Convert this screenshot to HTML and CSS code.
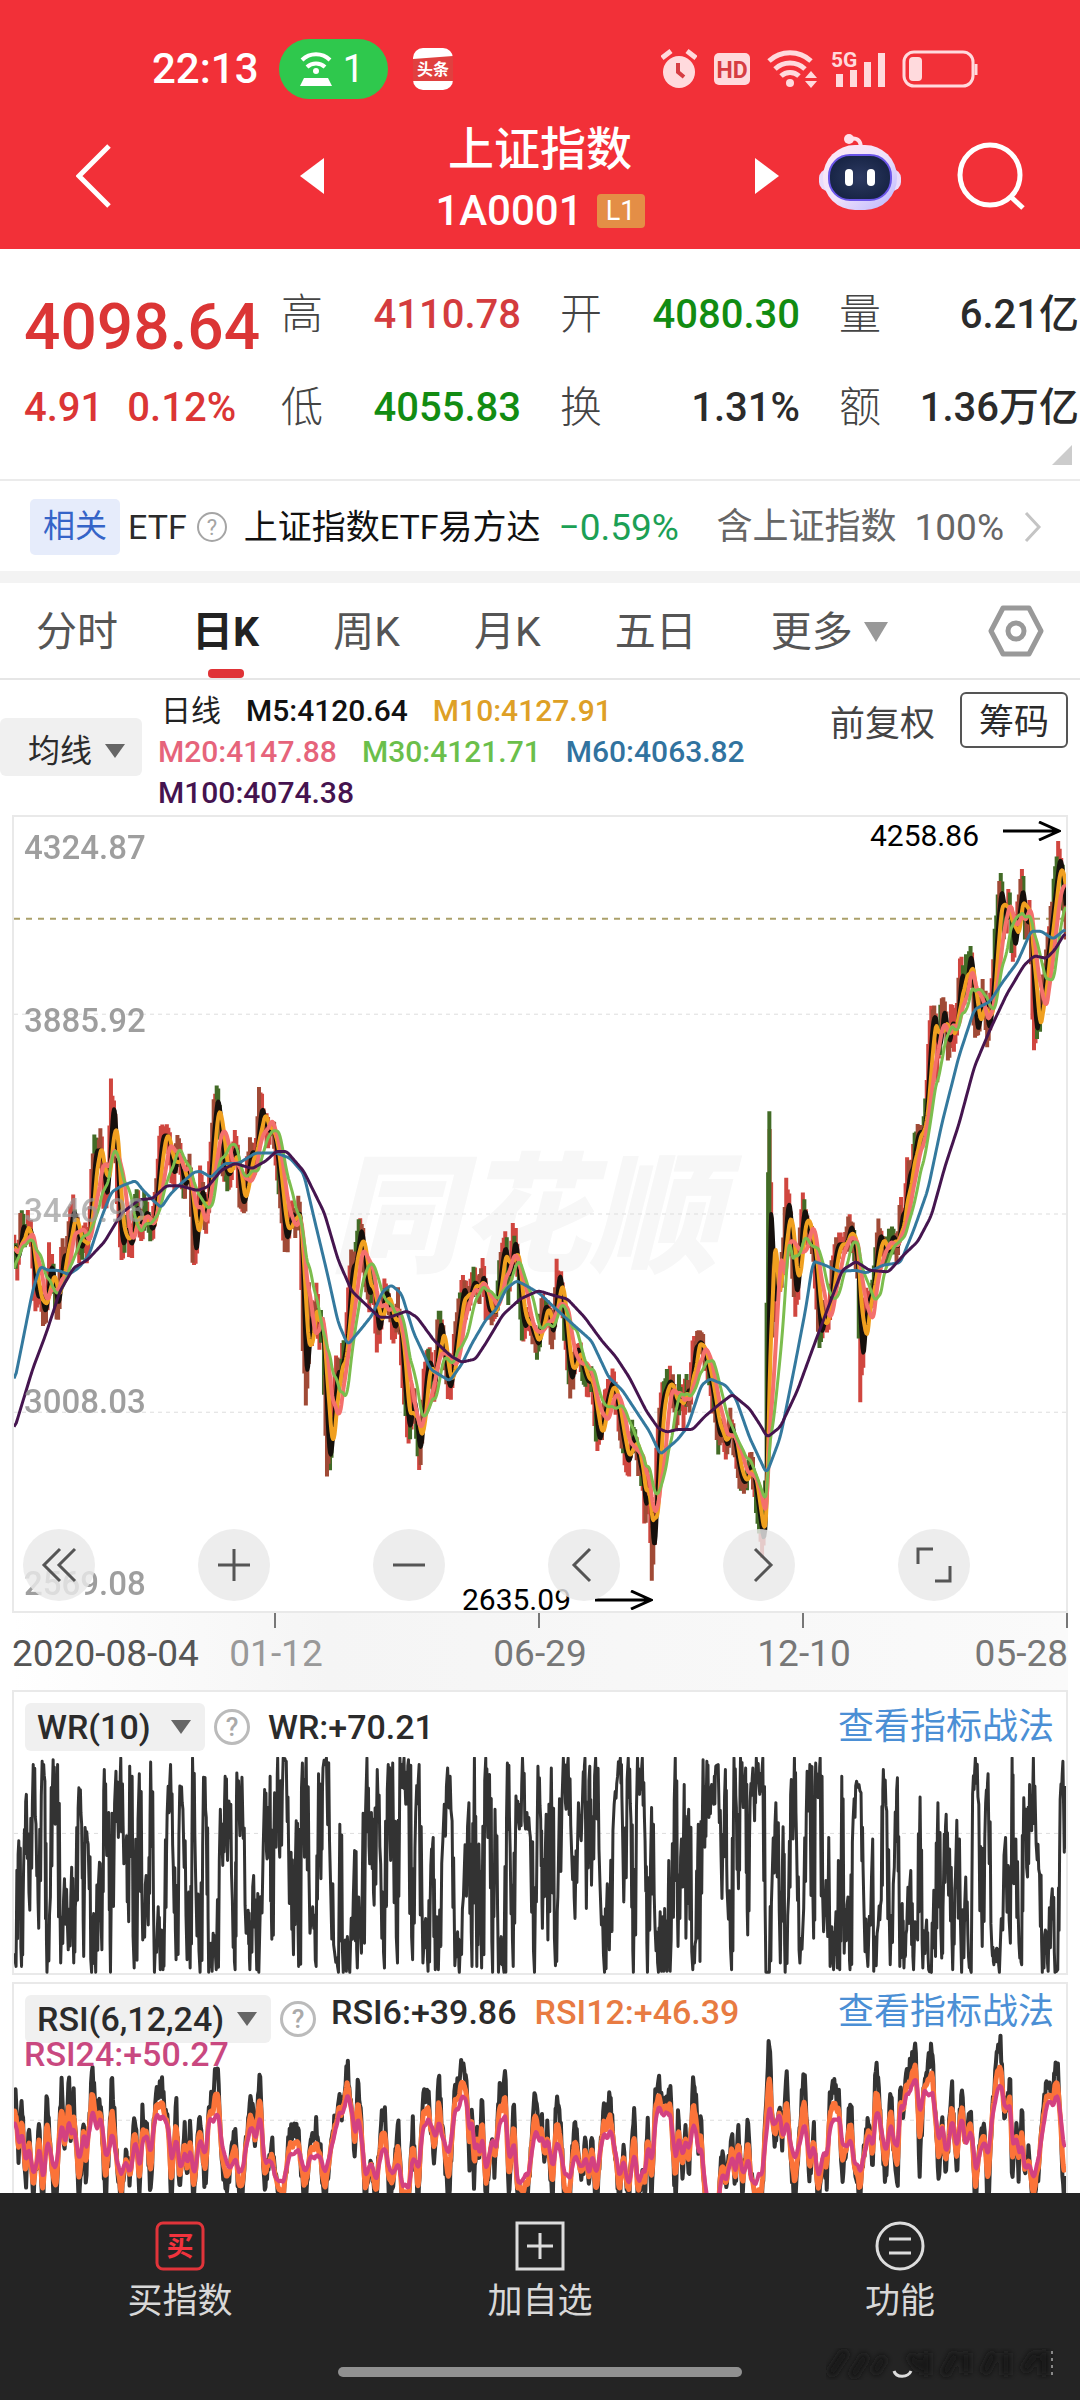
FILE: index.html
```
<!DOCTYPE html>
<html lang="zh-CN">
<head>
<meta charset="utf-8">
<meta name="viewport" content="width=device-width">
<title>上证指数 1A0001</title>
<link rel="stylesheet" href="styles.css">
</head>
<body>
<header class="top">
  <div class="status">
    <div class="status-side">
      <time class="clock">22:13</time>
      <span class="hotspot">
        <svg width="34" height="36" viewBox="0 0 34 36" fill="none" stroke="#fff" stroke-width="4"><path d="M3 9a20 20 0 0 1 28 0M8 16a13 13 0 0 1 18 0"/><circle cx="17" cy="20" r="3" fill="#fff" stroke="none"/><path d="M5 27h24l4 8H1z" fill="#fff" stroke="none"/></svg>
        <span>1</span>
      </span>
      <svg class="news" width="40" height="42" viewBox="0 0 40 42"><rect width="40" height="42" rx="10" fill="#fff"/><path d="M0 11l40-3v25H0z" fill="#e0403f"/><text x="20" y="27" text-anchor="middle" font-size="16" font-weight="700" fill="#fff">头条</text></svg>
    </div>
    <div class="status-side status-right">
      <svg width="36" height="40" viewBox="0 0 36 40"><circle cx="18" cy="23" r="16" fill="#ffdadd"/><path d="M1 9l9-7M35 9l-9-7" stroke="#ffdadd" stroke-width="5"/><path d="M17 14v9l6 5" fill="none" stroke="#d63d43" stroke-width="4"/></svg>
      <svg width="36" height="34" viewBox="0 0 36 34"><rect y="1" width="36" height="32" rx="5" fill="#ffdadd"/><text x="18" y="26" text-anchor="middle" font-size="23" font-weight="700" fill="#d63d43">HD</text></svg>
      <svg class="wifi" width="50" height="40" viewBox="0 0 50 40"><path d="M2 12a31 31 0 0 1 42 0M8 20a22 22 0 0 1 30 0M14 27a13 13 0 0 1 18 0" fill="none" stroke="#ffdadd" stroke-width="5"/><circle cx="23" cy="34" r="4" fill="#ffdadd"/><path d="M38 29l6-7 6 7zM38 32h12l-6 7z" fill="#ffdadd"/></svg>
      <svg width="54" height="40" viewBox="0 0 54 40" fill="#ffdadd"><text y="18" font-size="21" font-weight="700">5G</text><path d="M5 25h7v13H5zM19 21h7v17h-7zM33 13h7v25h-7zM47 4h7v34h-7z"/></svg>
      <svg width="78" height="38" viewBox="0 0 78 38"><rect x="2" y="2" width="69" height="34" rx="10" fill="none" stroke="#ffdadd" stroke-width="3"/><rect x="7" y="7" width="13" height="24" rx="4" fill="#ffdadd"/><path d="M74 14v11" stroke="#ffdadd" stroke-width="3"/></svg>
    </div>
  </div>
  <nav class="nav">
    <div class="nav-left">
      <button class="icon-btn" aria-label="返回"><svg width="36" height="64" viewBox="0 0 36 64"><path d="M33 2L3 32l30 30" fill="none" stroke="#fff" stroke-width="5"/></svg></button>
      <button class="icon-btn" aria-label="上一只"><svg width="24" height="36" viewBox="0 0 24 36"><path d="M24 0v36L0 18z" fill="#fff"/></svg></button>
    </div>
    <div class="nav-title">
      <h1>上证指数</h1>
      <p><span>1A0001</span><span class="level">L1</span></p>
    </div>
    <div class="nav-right">
      <button class="icon-btn" aria-label="下一只"><svg width="24" height="36" viewBox="0 0 24 36"><path d="M0 0v36l24-18z" fill="#fff"/></svg></button>
      <button class="icon-btn robot" aria-label="智能助手">
        <svg width="82" height="78" viewBox="0 0 82 78"><defs><linearGradient id="shell" x1="0" y1="0" x2="1" y2="1"><stop offset="0" stop-color="#ffe9f3"/><stop offset=".5" stop-color="#efe2fb"/><stop offset="1" stop-color="#b9b4ff"/></linearGradient><radialGradient id="visor"><stop offset="0" stop-color="#2c3961"/><stop offset="1" stop-color="#182546"/></radialGradient></defs><path d="M30 6c10-2 12 3 12 10" fill="none" stroke="#ffe0ea" stroke-width="4"/><circle cx="30" cy="6" r="5" fill="#ffe0ea"/><rect x="0" y="36" width="82" height="22" rx="9" fill="#e9dcfb"/><rect x="4" y="12" width="74" height="65" rx="32" fill="url(#shell)"/><rect x="10" y="22" width="62" height="45" rx="21" fill="url(#visor)" stroke="#6b55e8" stroke-width="2"/><rect x="26" y="36" width="8" height="17" rx="4" fill="#fff"/><rect x="48" y="36" width="8" height="17" rx="4" fill="#fff"/></svg>
      </button>
      <button class="icon-btn search" aria-label="搜索"><svg width="68" height="68" viewBox="0 0 68 68" fill="none" stroke="#fff" stroke-width="5"><circle cx="33" cy="33" r="30"/><path d="M53 54l13 12"/></svg></button>
    </div>
  </nav>
</header>

<main class="main">
  <section class="quote">
    <div class="last"><strong>4098.64</strong><p><span>4.91</span><span>0.12%</span></p></div>
    <dl class="stats">
      <div><dt>高</dt><dd class="up">4110.78</dd></div>
      <div><dt>开</dt><dd class="down">4080.30</dd></div>
      <div><dt>量</dt><dd>6.21亿</dd></div>
      <div><dt>低</dt><dd class="down">4055.83</dd></div>
      <div><dt>换</dt><dd>1.31%</dd></div>
      <div><dt>额</dt><dd>1.36万亿</dd></div>
    </dl>
    <span class="fold"></span>
  </section>

  <a class="etf" href="#etf">
    <span class="tag">相关</span><span class="etf-kind">ETF</span>
    <svg class="etf-help" width="32" height="32" viewBox="0 0 32 32"><circle cx="16" cy="16" r="14" fill="none" stroke="#a5a5a5" stroke-width="2"/><text x="16" y="24" text-anchor="middle" font-size="22" fill="#a5a5a5">?</text></svg>
    <span class="etf-name">上证指数ETF易方达</span><span class="etf-chg">−0.59%</span><span class="etf-part">含上证指数</span><span class="etf-pct">100%</span>
    <svg class="etf-go" width="18" height="32" viewBox="0 0 18 32"><path d="M2 2l13 14L2 30" fill="none" stroke="#c4c4c4" stroke-width="3"/></svg>
  </a>

  <div class="tabs">
    <button>分时</button><button class="on">日K</button><button>周K</button><button>月K</button><button>五日</button><button class="more">更多<i class="caret"></i></button>
    <button class="gear" aria-label="设置"><svg width="56" height="52" viewBox="0 0 56 52" fill="none" stroke="#999" stroke-width="5"><path d="M15 3h26l12 23-12 23H15L3 26z" stroke-linejoin="round"/><circle cx="28" cy="26" r="8"/></svg></button>
  </div>

  <div class="averages">
    <label class="picker picker-ma"><select aria-label="主图指标"><option>均线</option></select><i class="caret"></i></label>
    <div class="ma-list">
      <p><span class="c-day">日线</span><span class="c5">M5:4120.64</span><span class="c10">M10:4127.91</span></p>
      <p><span class="c20">M20:4147.88</span><span class="c30">M30:4121.71</span><span class="c60">M60:4063.82</span></p>
      <p><span class="c100">M100:4074.38</span></p>
    </div>
    <button class="adjust">前复权</button>
    <button class="chips">筹码</button>
  </div>

  <section class="kline">
    <span class="brand">同花顺</span>
    <svg class="plot" id="kline" viewBox="36 31 3064 1522" preserveAspectRatio="none"></svg>
    <span class="scale s1">4324.87</span><span class="scale s2">3885.92</span><span class="scale s3">3446.98</span><span class="scale s4">3008.03</span><span class="scale s5">2569.08</span>
    <span class="mark high">4258.86<svg width="58" height="20" viewBox="0 0 58 20"><path d="M0 10h56M36 1l20 9-20 9" fill="none" stroke="#000" stroke-width="3"/></svg></span>
    <span class="mark low">2635.09<svg width="58" height="20" viewBox="0 0 58 20"><path d="M0 10h56M36 1l20 9-20 9" fill="none" stroke="#000" stroke-width="3"/></svg></span>
    <div class="tools">
      <button aria-label="最早"><svg viewBox="0 0 36 36"><path d="M19 2L3 18l16 16M34 2L18 18l16 16"/></svg></button>
      <button aria-label="放大"><svg viewBox="0 0 36 36"><path d="M2 18h32M18 2v32"/></svg></button>
      <button aria-label="缩小"><svg viewBox="0 0 36 36"><path d="M2 18h32"/></svg></button>
      <button aria-label="左移"><svg viewBox="0 0 36 36"><path d="M24 2L8 18l16 16"/></svg></button>
      <button aria-label="右移"><svg viewBox="0 0 36 36"><path d="M14 2l16 16-16 16"/></svg></button>
      <button aria-label="全屏"><svg viewBox="0 0 36 36"><path d="M2 17V2h15M19 34h15V19"/></svg></button>
    </div>
  </section>
  <div class="dates"><span>2020-08-04</span><span class="d1">01-12</span><span>06-29</span><span>12-10</span><span>05-28</span></div>

  <section class="panel wr">
    <div class="panel-head">
      <label class="picker"><select aria-label="副图指标一"><option>WR(10)</option></select><i class="caret"></i></label>
      <button class="help" aria-label="说明">?</button>
      <span>WR:+70.21</span>
      <a href="#wr">查看指标战法</a>
    </div>
    <svg class="plot" id="wr" viewBox="36 47 3064 656" preserveAspectRatio="none"></svg>
  </section>
  <section class="panel rsi">
    <svg class="plot" id="rsi" viewBox="36 727 3064 632" preserveAspectRatio="none"></svg>
    <div class="panel-head">
      <label class="picker"><select aria-label="副图指标二"><option>RSI(6,12,24)</option></select><i class="caret"></i></label>
      <button class="help" aria-label="说明">?</button>
      <span>RSI6:+39.86</span><span class="r12">RSI12:+46.39</span>
      <a href="#rsi">查看指标战法</a>
    </div>
    <p class="r24">RSI24:+50.27</p>
  </section>
</main>

<footer class="bottom">
  <div class="actions">
    <button><svg width="50" height="50" viewBox="0 0 50 50"><rect x="2" y="2" width="46" height="46" rx="6" fill="none" stroke="#e1343a" stroke-width="3"/><text x="25" y="35" text-anchor="middle" font-size="27" font-weight="700" fill="#f2333d">买</text></svg>买指数</button>
    <button><svg width="50" height="50" viewBox="0 0 50 50" fill="none" stroke="#ddd" stroke-width="3"><rect x="2" y="2" width="46" height="46"/><path d="M12 25h26M25 12v26"/></svg>加自选</button>
    <button><svg width="50" height="50" viewBox="0 0 50 50" fill="none" stroke="#ddd" stroke-width="3"><circle cx="25" cy="25" r="23"/><path d="M14 18h22M14 32h22"/></svg>功能</button>
  </div>
  <span class="homebar"></span>
  <svg class="smudge" width="230" height="36" viewBox="0 0 230 36"><defs><filter id="soft"><feGaussianBlur stdDeviation="3"/></filter></defs><path d="M4 30L20 6M26 32l14-22M48 28l10-16M84 10l10 14M100 8v22M118 30l12-22M140 8v20M158 28l10-20M180 8v22M198 26l12-18M218 6v24" stroke="#151515" stroke-width="9" filter="url(#soft)"/><path d="M68 26c2 7 14 7 17 0" fill="none" stroke="#ddd" stroke-width="3"/><path d="M226 6v26" stroke="#888" stroke-width="2" stroke-dasharray="3 4"/></svg>
</footer>
<script src="charts.js"></script>
</body>
</html>
```
FILE: styles.css
```
* { box-sizing: border-box; }
body { margin: 0; min-height: 100vh; display: flex; flex-direction: column; background: #fff; color: #2b2b2b; font-family: Roboto, "Noto Sans CJK SC", sans-serif; font-size: 36px; line-height: 1; }
h1, p, dl, dd { margin: 0; font-weight: inherit; }
button, select { font: inherit; color: inherit; background: none; border: 0; padding: 0; margin: 0; }
a { color: inherit; text-decoration: none; }
svg { display: block; flex: none; }
span, dt, dd { white-space: nowrap; }

.top { background: #f23038; color: #fff; height: 249px; }
.status { display: flex; justify-content: space-between; height: 114px; padding: 24px 100px 0 152px; }
.status-side { display: flex; align-items: center; }
.status-right { gap: 17px; }
.wifi { margin-right: -3px; }
.clock { font-size: 42px; font-weight: 500; width: 127px; }
.hotspot { display: flex; align-items: center; justify-content: space-between; width: 109px; height: 60px; padding: 0 24px 0 20px; border-radius: 30px; background: #2fc84d; font-size: 38px; }
.news { margin-left: 25px; }
.nav { display: grid; grid-template-columns: 1fr 216px 1fr; align-items: center; height: 126px; }
.icon-btn { display: block; }
.nav-left { display: flex; align-items: center; justify-content: space-between; padding: 0 108px 4px 76px; }
.nav-right { display: flex; align-items: center; padding: 0 55px 4px 107px; }
.robot { margin-left: 40px; margin-top: -8px; }
.search { margin-left: auto; }
.nav-title { display: flex; flex-direction: column; align-items: center; padding-top: 4px; font-weight: 500; }
.nav-title h1 { font-size: 46px; line-height: 62px; }
.nav-title p { display: flex; align-items: center; gap: 14px; font-size: 42px; line-height: 62px; }
.level { width: 48px; height: 34px; border-radius: 4px; background: #e48e46; font-size: 27px; line-height: 34px; font-weight: 400; text-align: center; }

.main { display: flex; flex-direction: column; flex: 1; }
.quote { position: relative; display: flex; height: 232px; border-bottom: 2px solid #ebebeb; font-weight: 500; }
.last { width: 281px; padding: 42px 0 0 24px; color: #db3535; }
.last strong { display: block; font-size: 64px; line-height: 74px; font-weight: 500; }
.last p { display: flex; gap: 24px; font-size: 40px; line-height: 86px; }
.stats { flex: 1; display: grid; grid-template-columns: repeat(3, 1fr); column-gap: 39px; grid-auto-rows: 93px; padding: 19px 1px 0 0; }
.stats div { display: flex; align-items: center; justify-content: space-between; font-size: 40px; }
.stats dt { font-size: 42px; font-weight: 300; color: #444; }
.up { color: #d43c3e; }
.down { color: #128c12; }
.fold { position: absolute; right: 8px; bottom: 14px; border-left: 20px solid transparent; border-bottom: 20px solid #ccc; }

.etf { display: flex; align-items: center; height: 90px; padding: 2px 38px 0 30px; }
.tag { width: 90px; height: 56px; border-radius: 5px; background: #e6ecfb; color: #3564c8; font-size: 32px; line-height: 54px; text-align: center; }
.etf-kind { font-size: 34px; margin: 0 9px 0 8px; }
.etf-name { font-size: 34px; color: #111; margin-left: 16px; }
.etf-chg { color: #1ca055; margin-left: 18px; font-size: 37px; }
.etf-part { color: #666; margin-left: auto; }
.etf-pct { color: #666; margin: 0 20px 0 18px; font-size: 37px; }

.tabs { display: flex; align-items: center; height: 109px; padding: 0 36px; border-top: 12px solid #f3f3f3; border-bottom: 2px solid #e6e6e6; justify-content: space-between; color: #555; font-size: 41px; }
.tabs button { position: relative; height: 95px; padding-top: 3px; }
.tabs .on { color: #222; font-weight: 700; }
.on::after { content: ""; position: absolute; left: 50%; bottom: 0; margin-left: -18px; width: 36px; height: 9px; border-radius: 4px; background: #e03337; }
.caret { display: inline-block; flex: none; border: 10px solid transparent; border-top: 14px solid #666; border-bottom: 0; }
.more { display: flex; align-items: center; gap: 11px; }
.more .caret { border-width: 20px 12px 0; border-top-color: #999; }
.tabs .gear { margin-left: 26px; padding-top: 0; }

.averages { display: flex; align-items: flex-start; height: 135px; padding-right: 12px; }
.picker { position: relative; display: flex; align-items: center; justify-content: space-between; min-width: 180px; height: 48px; padding: 0 14px 0 12px; gap: 12px; border-radius: 6px; background: #f0f0f0; }
.picker select { appearance: none; font-size: 34px; line-height: 40px; }
.picker-ma { min-width: 0; width: 142px; height: 58px; margin: 38px 16px 0 0; padding: 8px 18px 0 28px; }
.picker-ma select { font-size: 32px; }
.ma-list { flex: 1; padding-top: 10px; font-size: 30px; font-weight: 500; line-height: 41px; }
.ma-list p { display: flex; gap: 25px; }
.c-day { color: #222; font-weight: 400; padding-left: 3px; }
.c5 { color: #111; }
.c10 { color: #dea026; }
.c20 { color: #e6647b; }
.c30 { color: #6bbf4b; }
.c60 { color: #31739f; }
.c100 { color: #45134f; }
.adjust { font-size: 35px; line-height: 54px; margin: 18px 25px 0 0; color: #444; }
.chips { width: 108px; height: 56px; margin-top: 12px; padding-top: 4px; border: 2px solid #555; border-radius: 6px; font-size: 35px; }

.kline { position: relative; height: 798px; margin: 0 12px; border: 2px solid #e9e9e9; }
.plot { position: absolute; inset: 0; width: 100%; height: 100%; }
.plot path { fill: none; vector-effect: non-scaling-stroke; stroke-linejoin: round; }
.brand { position: absolute; left: 30%; top: 336px; font-size: 130px; font-style: italic; font-weight: 900; color: #f7f7f7; }
.scale { position: absolute; left: 10px; font-size: 33px; font-weight: 500; color: #999; opacity: .95; }
.s1 { top: 14px; }
.s2 { top: 187px; }
.s3 { top: 377px; opacity: .7; }
.s4 { top: 568px; }
.s5 { top: 750px; }
.mark { position: absolute; display: flex; font-size: 30px; color: #000; gap: 24px; }
.high { right: 5px; top: 4px; }
.low { right: 413px; bottom: -4px; align-items: center; }
.tools { position: absolute; left: 9px; right: 96px; bottom: 10px; display: flex; justify-content: space-between; }
.tools button { width: 72px; height: 72px; border-radius: 50%; background: rgba(233, 233, 233, .82); display: grid; place-items: center; }
.tools svg { width: 36px; height: 36px; fill: none; stroke: #555; stroke-width: 3px; }
.dates { display: grid; grid-template-columns: minmax(0, 1fr) repeat(3, minmax(0, 2fr)) minmax(0, 1fr); align-items: center; height: 77px; margin: 0 12px; padding-top: 4px; color: #777; font-size: 37px; text-align: center; background: repeating-linear-gradient(90deg, transparent 0 calc(25% - 2px), #777 calc(25% - 2px) 25%) 0 0 / 100% 15px no-repeat, linear-gradient(90deg, #fff, #f5f5f5 30%, #fafafa); }
.dates span:first-child { color: #555; justify-self: start; }
.dates span:last-child { justify-self: end; }
.dates .d1 { color: #999; }

.panel { position: relative; margin: 0 12px; border: 2px solid #e9e9e9; }
.wr { height: 285px; }
.wr .plot { top: 65px; height: 217px; }
.rsi { flex: 1; min-height: 211px; margin-top: 7px; border-bottom: 0; overflow: hidden; }
.panel-head { position: relative; display: flex; align-items: center; height: 48px; margin: 11px 12px 0 11px; font-size: 34px; font-weight: 500; }
.panel-head > span { margin-left: 18px; }
.panel-head a { margin-left: auto; color: #4b8fd5; font-size: 36px; font-weight: 400; }
.help { width: 36px; height: 36px; margin-left: 9px; border: 3px solid #bbb; border-radius: 50%; color: #aaa; font-size: 26px; }
.rsi .panel-head > span, .rsi .panel-head a { align-self: flex-start; line-height: 34px; }
.rsi .panel-head > span { margin-left: 15px; }
.rsi .panel-head .r12 { color: #e87b42; margin-left: 18px; }
.r24 { position: relative; color: #c94880; margin-left: 10px; font-size: 34px; font-weight: 500; line-height: 22px; }

.bottom { position: relative; height: 208px; background: #242424; color: #d8d8d8; }
.actions { display: grid; grid-template-columns: repeat(3, 1fr); }
.actions button { display: flex; flex-direction: column; align-items: center; gap: 13px; padding-top: 28px; font-size: 35px; line-height: 36px; }
.homebar { position: absolute; left: 50%; bottom: 24px; width: 404px; height: 10px; margin-left: -202px; border-radius: 5px; background: #919191; }
.smudge { position: absolute; right: 24px; bottom: 20px; }
```
FILE: charts.js
```
const HALF = 1568;
const join = (a, b) => {
  const pairs = (s, dx) => s.trim().split(/\s+/).map(p => p.split(',').map(Number)).map(([x, y]) => [x + dx, y]);
  return pairs(a, 0).concat(pairs(b, HALF));
};

const price = join(
  `36,850 45,900 57,790 68,850 78,800 90,880 97,980 105,930 125,995 138,870 150,930 162,985 175,850 185,890 200,790 208,780 218,830 228,870 240,820 250,870 262,720 273,645 282,700 288,635 297,770 308,740 318,555 326,600 335,740 348,880 360,800 373,870 385,800 393,755 404,845 415,775 436,835 450,750 460,645 470,640 485,645 497,740 510,650 520,700 528,750 548,690 557,895 565,850 578,720 594,825 606,700 616,600 628,555 640,690 658,725 670,690 680,640 690,755 705,780 715,700 726,660 738,700 750,570 760,610 775,640 787,620 805,720 826,860 840,780 857,820 867,750 876,1030 887,1150 895,940 905,1030 916,935 924,1050 932,980 948,1290 962,1200 972,1080 985,1110 991,1050 1000,1060 1016,880 1028,900 1037,825 1046,815 1058,920 1070,960 1080,900 1092,1035 1105,980 1112,930 1125,960 1142,1025 1155,955 1165,1100 1187,1230 1195,1110 1205,1200 1216,1270 1228,1120 1242,1060 1260,1140 1268,1010 1275,985 1290,1080 1301,1145 1312,1080 1322,1020 1333,970 1345,915 1353,980 1362,940 1375,915 1388,950 1400,890 1410,975 1425,980 1438,980 1450,890 1466,840 1475,945 1490,820 1500,890 1517,1025 1530,980 1540,1015 1562,1050`,
  `5,970 20,970 36,1040 47,905 57,910 68,1000 88,1130 100,1050 110,1050 125,1100 140,1120 150,1100 165,1240 180,1190 190,1150 208,1105 220,1150 240,1235 255,1280 268,1200 285,1270 300,1310 306,1415 314,1250 325,1490 335,1350 340,1240 350,1150 360,1130 378,1105 398,1190 404,1110 418,1180 425,1095 435,1170 443,1050 455,1045 464,1030 475,1060 490,1100 505,1160 520,1230 530,1200 541,1255 552,1180 565,1240 585,1310 600,1300 612,1260 630,1350 650,1440 657,1300 661,870 668,595 672,850 675,1040 683,920 690,900 700,930 710,830 718,740 725,790 735,900 745,975 753,870 765,755 775,830 790,830 800,900 815,1050 825,970 838,1000 850,900 860,850 875,850 890,850 903,800 913,860 925,900 932,1140 940,1010 950,960 965,940 975,890 983,820 995,850 1010,870 1023,825 1040,870 1048,780 1060,800 1070,700 1080,720 1090,650 1103,630 1115,640 1125,560 1135,430 1142,410 1152,415 1158,540 1165,410 1178,400 1187,500 1200,370 1204,480 1215,400 1225,295 1235,400 1240,320 1255,285 1265,450 1275,430 1290,360 1304,465 1318,330 1332,200 1343,150 1350,250 1360,210 1366,170 1375,305 1390,220 1404,145 1412,260 1425,200 1432,320 1437,485 1445,410 1455,420 1470,320 1485,240 1500,150 1511,90 1522,180 1532,260`);
const ma60 = join(
  `36,1118 60,1040 90,940 112,892 135,900 165,900 195,908 225,895 255,870 290,800 320,750 350,738 390,728 410,745 440,765 465,780 490,755 520,735 560,712 580,710 610,722 650,695 690,695 740,675 800,675 840,685 880,715 910,800 950,910 980,1000 1008,1043 1050,1010 1080,985 1110,940 1135,928 1165,945 1200,1020 1250,1090 1305,1112 1340,1080 1370,1040 1410,995 1440,975 1470,935 1500,920 1530,930`,
  `0,945 40,970 90,1000 150,1035 200,1105 240,1130 290,1180 320,1210 350,1253 400,1225 430,1200 470,1120 495,1108 540,1120 570,1145 610,1220 660,1290 700,1220 740,1090 775,970 795,882 830,890 870,902 920,900 950,905 1000,890 1050,885 1090,820 1130,745 1170,620 1220,490 1265,400 1310,385 1350,345 1390,310 1430,250 1460,250 1495,265 1532,245`);
const ma100 = join(
  `36,1207 90,1090 130,1020 170,940 210,895 250,880 300,845 350,790 400,765 440,762 480,738 520,738 570,747 600,740 640,708 680,695 730,705 770,690 800,672 830,672 880,710 940,790 980,880 1020,940 1060,965 1100,990 1130,990 1180,978 1210,990 1260,1035 1310,1065 1340,1076 1380,1070 1410,1040 1460,985 1510,955 1560,940`,
  `0,940 50,950 80,955 130,990 180,1035 220,1065 260,1105 310,1170 345,1203 370,1210 400,1205 445,1205 480,1180 520,1158 560,1138 610,1165 640,1195 662,1220 700,1200 750,1130 800,1040 840,970 880,900 920,883 960,900 1015,903 1060,870 1100,845 1140,795 1180,700 1220,620 1265,510 1310,440 1360,370 1410,315 1440,297 1475,302 1500,285 1532,250`);
const wr = join(
  `36,640 42,680 50,300 58,680 64,380 72,160 82,510 92,70 100,250 108,565 118,60 126,120 132,698 142,470 150,55 156,250 163,70 172,670 183,415 194,630 204,380 210,670 216,480 225,140 233,250 239,650 243,260 252,310 262,698 268,520 274,698 285,365 292,630 299,85 306,345 312,215 317,698 333,90 340,290 347,50 356,370 364,285 370,545 373,75 386,685 401,98 411,600 421,405 427,555 434,62 445,698 456,500 462,690 466,570 470,690 475,520 482,220 492,70 500,380 508,660 519,135 528,205 540,660 545,455 549,685 556,50 565,410 578,698 588,108 596,230 603,698 610,610 613,695 616,580 625,690 637,205 644,375 651,105 658,360 662,180 672,480 680,690 685,95 694,285 700,108 712,580 718,510 723,690 734,405 743,690 746,460 749,698 766,145 773,355 776,200 779,350 782,105 787,598 795,155 799,320 804,50 810,350 820,50 829,60 838,490 843,335 850,645 858,240 865,680 876,65 882,350 887,50 898,580 906,500 916,680 923,98 930,415 936,80 946,50 958,430 970,640 981,698 985,250 995,698 1001,600 1004,695 1007,590 1014,698 1028,330 1036,685 1040,470 1048,640 1064,50 1072,370 1077,215 1085,495 1094,85 1104,370 1115,685 1126,70 1133,360 1139,65 1153,670 1160,50 1167,140 1172,50 1177,190 1185,55 1197,660 1206,215 1216,70 1227,670 1235,535 1242,695 1250,375 1257,290 1263,690 1268,530 1272,690 1285,300 1299,80 1312,240 1320,678 1328,575 1333,698 1345,470 1361,185 1370,680 1377,50 1384,680 1390,310 1398,685 1410,50 1416,290 1421,100 1430,698 1437,205 1447,698 1455,590 1463,698 1473,65 1481,320 1490,680 1498,165 1508,265 1517,50 1526,265 1530,215 1540,290 1552,698 1562,75`,
  `2,235 7,565 18,220 23,600 33,80 45,678 52,470 68,50 76,205 82,50 92,330 102,535 112,185 120,300 124,165 131,50 135,505 145,75 150,435 162,50 175,440 188,698 196,430 202,630 216,190 226,105 234,50 240,240 244,485 257,50 265,240 272,698 284,50 290,160 298,50 306,300 313,698 325,200 335,560 345,698 350,515 354,695 358,530 361,695 363,505 370,695 375,360 379,695 382,600 394,50 402,620 412,295 416,440 420,130 425,595 433,205 445,690 454,600 461,250 466,665 475,55 480,320 486,60 492,230 500,130 506,190 512,75 519,70 530,475 540,85 545,450 558,690 565,50 572,200 578,445 584,50 592,200 599,80 605,585 612,180 620,80 625,240 630,50 640,160 649,50 658,698 668,698 676,420 687,185 700,670 708,258 714,698 724,470 732,115 737,295 741,50 747,290 757,670 768,505 778,90 782,210 786,70 797,595 803,65 810,170 816,50 826,575 833,420 838,590 841,290 845,680 850,560 855,690 862,515 866,685 869,360 873,690 879,105 886,640 897,470 903,690 912,235 922,120 935,155 943,480 955,680 969,295 972,695 985,555 994,480 1000,85 1010,210 1020,675 1032,380 1041,110 1048,680 1055,490 1060,685 1068,570 1080,390 1088,690 1092,545 1100,600 1107,168 1115,685 1126,540 1132,690 1140,698 1147,450 1152,650 1159,185 1170,655 1175,445 1183,220 1190,465 1193,325 1202,690 1210,410 1214,238 1228,698 1240,410 1248,650 1256,698 1260,160 1268,50 1278,190 1288,620 1298,185 1305,98 1316,620 1322,675 1330,625 1338,698 1356,290 1370,610 1375,50 1380,430 1386,295 1395,610 1403,675 1409,170 1420,410 1426,130 1432,270 1437,50 1445,310 1455,400 1463,698 1472,570 1480,695 1492,445 1500,698 1508,690 1515,175 1523,60 1527,335 1532,135`);
const rsi = join(
  `36,1080 42,1075 50,1280 58,1048 70,1335 80,1150 92,1400 109,1150 120,1400 132,1045 145,1300 160,1400 174,1030 183,1250 196,1022 202,1230 210,1070 225,1400 240,1120 245,1310 255,1150 265,975 275,1120 290,1100 302,1380 312,1250 321,998 335,1250 348,1400 362,1215 372,1330 388,1115 401,1360 410,1125 422,1150 434,1350 448,1060 458,1070 466,1008 476,1130 485,1130 495,1400 508,1062 518,1350 533,1170 540,1310 549,1140 558,1400 578,1100 592,1360 602,1130 615,1060 629,965 640,1250 655,1380 668,1250 680,1135 690,1370 700,1390 712,1190 726,1062 738,1190 753,987 765,1340 787,1190 800,1330 820,1400 836,1200 850,1155 865,1170 880,1400 900,1220 916,1155 930,1250 940,1400 958,1220 970,1150 982,1055 988,1150 1006,975 1018,1060 1028,1250 1037,1018 1050,1180 1060,1400 1075,1230 1090,1400 1105,1130 1115,1098 1128,1340 1142,1340 1154,1112 1168,1400 1185,1400 1197,1150 1213,1400 1227,1090 1242,1048 1260,1270 1273,1010 1285,1180 1302,1400 1320,1050 1332,1010 1345,938 1356,1060 1362,1275 1370,1100 1376,1350 1384,1130 1390,1280 1399,1085 1410,1400 1428,1150 1436,1310 1451,1025 1458,1080 1466,977 1478,1380 1491,1065 1500,1340 1518,1380 1535,1340 1553,1050 1565,1160`,
  `5,1125 14,1270 22,1155 36,1400 49,1037 60,1150 72,1400 85,1400 102,1108 115,1290 124,1310 133,1190 140,1330 151,1205 165,1400 178,1210 188,1095 194,1150 203,1075 212,1140 230,1400 244,1215 258,1400 273,1098 285,1400 297,1290 305,1400 313,1120 325,1400 335,1080 344,1005 352,1080 362,1075 372,1080 380,1070 395,1400 402,1125 415,1330 424,1160 433,1310 446,1038 456,1090 461,1250 467,1078 480,1400 500,1420 520,1400 531,1205 542,1340 560,1165 568,1350 578,1168 590,1360 605,1152 618,1340 630,1400 645,1420 658,1100 668,887 676,1130 684,1230 698,1110 705,1225 717,990 730,1250 742,1400 760,1100 771,997 785,1330 797,1140 808,1400 825,1240 835,1320 843,1080 852,1020 862,1060 870,1060 880,1315 890,1240 904,1060 915,1250 932,1400 945,1220 956,1140 969,1275 976,1010 984,970 992,1150 1005,1340 1022,1055 1030,1220 1041,1350 1048,1018 1058,1130 1068,1000 1078,980 1094,925 1106,1290 1118,1030 1128,1000 1141,903 1150,1100 1160,1325 1170,1140 1183,1300 1200,1035 1213,1310 1228,1037 1238,1220 1255,1105 1268,1400 1280,1200 1292,1150 1305,1390 1318,1100 1332,920 1342,900 1352,1160 1370,1012 1375,1350 1388,1150 1394,1300 1404,1078 1411,1310 1422,1240 1437,1400 1452,1290 1465,1100 1483,1010 1494,1070 1505,937 1515,1100 1525,1400 1532,1290`);

// Linear interpolation onto one sample per trading day
const DAY = 2.2;
function daily(keys, from = 36) {
  const out = [];
  let k = 0;
  for (let x = from; x <= 3100; x += DAY) {
    while (k < keys.length - 2 && keys[k + 1][0] < x) k++;
    const [x0, y0] = keys[k], [x1, y1] = keys[k + 1];
    out.push([x, y0 + (y1 - y0) * (x - x0) / (x1 - x0)]);
  }
  return out;
}
// Mean over the window [i - before, i + after]
const mean = (pts, before, after) => pts.map(([x], i) => {
  const part = pts.slice(Math.max(0, i - before), i + after + 1);
  return [x, part.reduce((s, p) => s + p[1], 0) / part.length];
});
const average = (pts, n) => mean(pts, n - 1, 0);
const noise = i => { const v = Math.sin(i * 12.9898) * 43758.5453; return v - Math.floor(v); };
const d = pts => 'M' + pts.map(([x, y]) => x.toFixed(1) + ' ' + y.toFixed(1)).join('L');
function draw(id, path, color, width, dash) {
  const el = document.createElementNS('http://www.w3.org/2000/svg', 'path');
  el.setAttribute('d', path);
  el.setAttribute('stroke', color);
  el.setAttribute('stroke-width', width);
  if (dash) el.setAttribute('stroke-dasharray', dash);
  document.getElementById(id).append(el);
}

// Daily candles with moving averages
[409, 792, 1172].forEach(y => draw('kline', `M36 ${y}H3100`, '#ddd', 1, '4 4'));
draw('kline', 'M36 226H3100', '#aaa06a', 2, '6 6');
const history = [[-60, 1330], [-25, 1000], [0, 870]].concat(price);
const closes = daily(history, -60);
const m5 = average(closes, 5);
const bars = { '#d0463f': '', '#426b26': '', '#a04a36': '' };
closes.forEach(([x, y], i) => {
  if (x < 36 || i % 2) return;
  const top = Math.min(y, m5[i][1]) - 6 - noise(i) * 22;
  const bottom = Math.max(y, m5[i][1]) + 6 + noise(i + 7) * 22;
  const pick = noise(Math.floor(i / 3) + 3);
  const color = pick < .5 ? '#d0463f' : pick < .72 ? '#426b26' : '#a04a36';
  bars[color] += `M${x.toFixed(1)} ${top.toFixed(1)}V${bottom.toFixed(1)}`;
});
Object.entries(bars).forEach(([color, path]) => draw('kline', path, color, 4));
draw('kline', 'M2236 595V850', '#426b26', 4);
const visible = pts => pts.filter(p => p[0] >= 36);
draw('kline', d(visible(average(closes, 7))), '#15100c', 4);
draw('kline', d(visible(average(closes, 12))), '#f0a020', 4);
draw('kline', d(visible(average(closes, 20))), '#f4706c', 4);
draw('kline', d(visible(average(closes, 30))), '#7cbd4e', 3);
draw('kline', d(mean(daily(ma60), 3, 3)), '#34799e', 3);
draw('kline', d(mean(daily(ma100), 3, 3)), '#45154f', 3);

// WR oscillator: every leg retraces part of its way before it goes on
const legs = wr.flatMap(([x, y], i) => {
  const next = wr[i + 1];
  if (!next || next[0] - x < 5) return [[x, y]];
  const at = (u, v) => [x + (next[0] - x) * u, y + (next[1] - y) * v];
  return [[x, y], at(.3, .35 + noise(i) * .45), at(.55, noise(i + 5) * .35), at(.75, .6 + noise(i + 9) * .3)];
});
draw('wr', 'M36 278H3100', '#ddd', 1, '4 4');
draw('wr', d(legs), '#333', 3);

// RSI: the longer periods stay closer to the slow mean
const rough = daily(rsi).map(([x, y], i) => [x, y + (noise(i) - .5) * 70]);
const slow = mean(rough, 16, 16);
const blend = (pts, k, shift) => pts.map(([x, y], i) => [x, y * k + slow[i][1] * (1 - k) + shift]);
draw('rsi', 'M36 1139H3100', '#ddd', 1, '4 4');
draw('rsi', d(rough), '#333', 4);
draw('rsi', d(blend(mean(rough, 1, 1), .66, 8)), '#fb7339', 5);
draw('rsi', d(blend(mean(rough, 2, 1), .34, 10)), '#d34180', 4);
```
